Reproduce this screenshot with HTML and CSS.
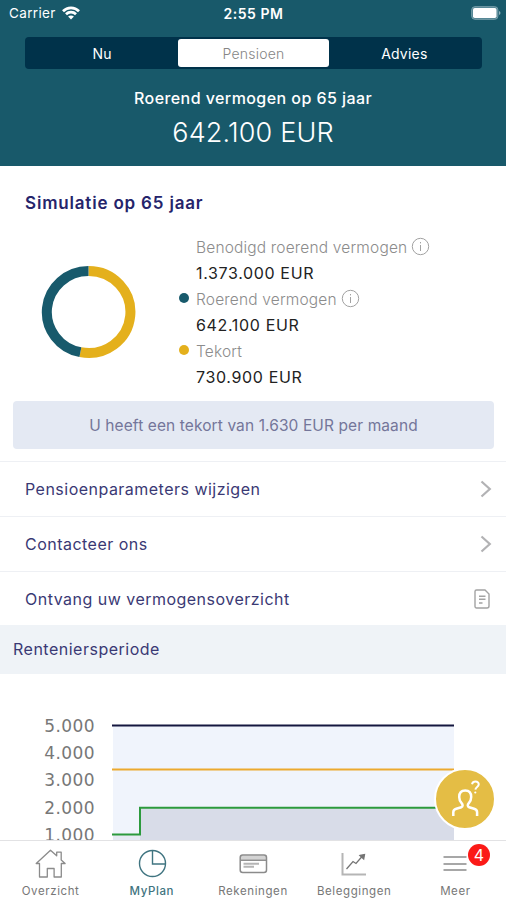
FILE: index.html
```
<!DOCTYPE html>
<html lang="nl">

<head>
    <meta charset="UTF-8">
    <meta name="viewport" content="width=device-width, initial-scale=1.0">
    <title>MyPlan</title>
    <link rel="stylesheet" href="styles.css">
</head>

<body>

    <header class="header">
        <div class="status-bar">
            <div class="carrier">
                <span>Carrier</span>
                <svg width="18" height="14" viewBox="0 0 18 14" fill="none" stroke="#fff" stroke-width="2.7">
                    <path d="M1 5.2C5.4 .7 12.6 .7 17 5.2" />
                    <path d="M4 8.3C6.8 5.5 11.2 5.5 14 8.3" />
                    <path d="M9 13.6L6.1 10.6C7.8 9.2 10.2 9.2 11.9 10.6Z" fill="#fff" stroke="none" />
                </svg>
            </div>
            <span class="time">2:55 PM</span>
            <svg class="battery" width="30" height="14" viewBox="0 0 30 14">
                <rect x=".7" y=".7" width="26.2" height="12.6" rx="3.2" fill="#4f8290" stroke="#7ba2ad" />
                <rect x="2" y="2" width="23.5" height="10" rx="1.8" fill="#fff" />
                <path d="M28 5v4c2-.8 2-3.2 0-4z" fill="#8fb0ba" />
            </svg>
        </div>
        <nav class="segments">
            <div class="segment">Nu</div>
            <div class="segment active">Pensioen</div>
            <div class="segment">Advies</div>
        </nav>
        <h1>Roerend vermogen op 65 jaar</h1>
        <p class="total">642.100 EUR</p>
    </header>

    <main class="content">
        <section class="simulation">
            <h2>Simulatie op 65 jaar</h2>
            <div class="summary">
                <svg class="donut" width="96" height="94" viewBox="0 0 96 94" fill="none" stroke-width="10">
                    <path d="M47.5 6A41.8 41 0 1 1 39.4 87.2" stroke="#e4b01c" />
                    <path d="M39.4 87.2A41.8 41 0 0 1 47.5 6" stroke="#185a6c" />
                </svg>
                <dl class="legend">
                    <dt><span>Benodigd roerend vermogen</span>
                        <svg width="19" height="19" viewBox="0 0 19 19" fill="none" stroke="#a2a2a2"><circle cx="9.5" cy="9.5" r="8.2" /><path d="M9.5 5v1.4M9.5 8v6" /></svg>
                    </dt>
                    <dd>1.373.000 EUR</dd>
                    <dt class="dot blue"><span>Roerend vermogen</span>
                        <svg width="19" height="19" viewBox="0 0 19 19" fill="none" stroke="#a2a2a2"><circle cx="9.5" cy="9.5" r="8.2" /><path d="M9.5 5v1.4M9.5 8v6" /></svg>
                    </dt>
                    <dd>642.100 EUR</dd>
                    <dt class="dot yellow"><span>Tekort</span></dt>
                    <dd>730.900 EUR</dd>
                </dl>
            </div>
            <div class="notice">U heeft een tekort van 1.630 EUR per maand</div>
        </section>

        <ul class="links">
            <li>
                <span>Pensioenparameters wijzigen</span>
                <svg width="12" height="18" viewBox="0 0 12 18" fill="none" stroke="#b2b2b4" stroke-width="2.2"><path d="M1.5 1.5L9.8 9l-8.3 7.5" /></svg>
            </li>
            <li>
                <span>Contacteer ons</span>
                <svg width="12" height="18" viewBox="0 0 12 18" fill="none" stroke="#b2b2b4" stroke-width="2.2"><path d="M1.5 1.5L9.8 9l-8.3 7.5" /></svg>
            </li>
            <li>
                <span>Ontvang uw vermogensoverzicht</span>
                <svg class="doc" width="16" height="20" viewBox="0 0 16 20" fill="none" stroke="#a3a3a3" stroke-width="1.4">
                    <path d="M2.5 1H11l4 4v12a2 2 0 0 1-2 2H2.5A1.5 1.5 0 0 1 1 17.5V2.5A1.5 1.5 0 0 1 2.5 1z" />
                    <path d="M5 7.2h6.5M5 10.2h6.5M5 14h3.5" stroke-width="1.5" />
                </svg>
            </li>
        </ul>

        <h3>Renteniersperiode</h3>

        <section class="chart">
            <div class="axis">
                <span>5.000</span>
                <span>4.000</span>
                <span>3.000</span>
                <span>2.000</span>
                <span>1.000</span>
            </div>
            <svg width="342" height="126" viewBox="0 0 342 126" fill="none" stroke-width="2">
                <rect x="1" y="11" width="341" height="115" fill="#f0f4fc" />
                <path d="M28 126V94H342V126z" fill="#d8dce8" />
                <path d="M1 120H28V126H1z" fill="#e6eaf3" />
                <path d="M0 11.5H342" stroke="#14173f" />
                <path d="M0 55.5H342" stroke="#eca92f" />
                <path d="M0 120.5H28V93.8H342" stroke="#2c9a3d" />
            </svg>
        </section>
    </main>

    <div class="help">
        <svg width="32" height="40" viewBox="0 0 32 40" fill="none" stroke="#fff" stroke-width="2.5">
            <path d="M3.3 36v-3.8c0-1.7 1-2.8 3-3.4l5-1.6c1.8-.6 1.6-2.6.3-4C9.6 21 9.2 19 9.2 17c0-4.5 2.5-6.5 6-6.5s6 2 6 6.5c0 2-.4 4-2.4 6.2-1.3 1.4-1.5 3.4.3 4l5 1.6c2 .6 3 1.7 3 3.4V36" />
            <path d="M22 4.2c.6-2 2-2.6 3.4-2.6 2.3 0 3.5 1.3 3.3 3-.2 2.400-3.2 2.4-3.300 5" stroke-width="2" />
            <circle cx="25.3" cy="12.5" r="1.1" fill="#fff" stroke="none" />
        </svg>
    </div>

    <nav class="tab-bar">
        <div class="tab">
            <svg width="32" height="30" viewBox="0 0 32 30" fill="none" stroke="#8b8b8b" stroke-width="1.3">
                <path d="M4.5 14.5H1.2L15.5 1.2l6.2 5.600V3.2h4.5v7.7l3.9 3.6h-3.8V28h-7.2v-8.5h-6.8V28H4.5z" stroke-linejoin="round" />
            </svg>
            <span>Overzicht</span>
        </div>
        <div class="tab selected">
            <svg width="30" height="30" viewBox="0 0 30 30" fill="none" stroke="#3f7480" stroke-width="1.4">
                <circle cx="15.5" cy="14.5" r="13" />
                <path d="M15.5 1.5V15H28.5" />
            </svg>
            <span>MyPlan</span>
        </div>
        <div class="tab">
            <svg width="30" height="30" viewBox="0 0 30 30" fill="none" stroke="#8b8b8b" stroke-width="1.5">
                <path d="M2.5 8.5h26" stroke="#d3d3d3" stroke-width="4" />
                <rect x="2.2" y="6" width="26.3" height="17.5" rx="2.5" />
                <path d="M2.2 11.2h26.3" />
                <path d="M5.5 14.7h15.500M5.5 17.700h10.500" stroke="#b5b5b5" stroke-width="2" />
            </svg>
            <span>Rekeningen</span>
        </div>
        <div class="tab">
            <svg width="30" height="30" viewBox="0 0 30 30" fill="none" stroke="#747474" stroke-width="1.3">
                <path d="M3.5 4v21.5h23.5" stroke="#b5b5b5" stroke-width="2" />
                <path d="M7.5 20l6.5-7.500 3 2L23.5 7" />
                <path d="M21 6.5l4.5-1-.8 4.5z" fill="#747474" />
            </svg>
            <span>Beleggingen</span>
        </div>
        <div class="tab">
            <svg width="30" height="30" viewBox="0 0 30 30" fill="none" stroke="#8b8b8b" stroke-width="1.5">
                <path d="M3.5 8H26.5M3.5 15H26.5M3.5 21H26.5" />
            </svg>
            <span>Meer</span>
            <b class="badge">4</b>
        </div>
    </nav>

</body>

</html>
```
FILE: styles.css
```
* {
    box-sizing: border-box;
}

body {
    display: flex;
    flex-direction: column;
    height: 900px;
    margin: 0;
    overflow: hidden;
    background-color: #fff;
    color: #3a3974;
    font-family: Inter, "Liberation Sans", sans-serif;
    font-size: 16px;
    white-space: nowrap;
}

h1, h2, h3, p, ul, dl, dd {
    margin: 0;
    padding: 0;
}

svg {
    display: block;
    flex-shrink: 0;
}

.header {
    height: 166px;
    flex-shrink: 0;
    background-color: #18596a;
    color: #fff;
    text-align: center;
}

.status-bar {
    display: grid;
    grid-template-columns: 1fr auto 1fr;
    align-items: center;
    height: 26px;
    padding: 0 5px 0 9px;
    font-size: 13.5px;
}

.carrier {
    display: flex;
    align-items: center;
    gap: 6px;
    letter-spacing: 0.35px;
}

.time {
    margin-right: 3px;
    font-size: 14px;
    font-weight: 600;
    letter-spacing: 0.5px;
}

.battery {
    justify-self: end;
}

.segments {
    display: grid;
    grid-template-columns: repeat(3, 1fr);
    width: 457px;
    height: 32px;
    margin: 11px 0 0 25px;
    border-radius: 4px;
    background-color: #00324a;
}

.segment {
    display: flex;
    align-items: center;
    justify-content: center;
    font-size: 14px;
    letter-spacing: 0.2px;
    border-radius: 3px;
}

.segment:first-child {
    padding-left: 2px;
}

.segment:last-child {
    padding-right: 3px;
}

.segment.active {
    margin: 2px 1px;
    background-color: #fff;
    color: #858585;
    font-weight: 300;
}

h1 {
    margin-top: 18px;
    font-size: 16px;
    font-weight: 500;
    line-height: 22px;
    letter-spacing: 0.43px;
}

.total {
    margin-top: 8px;
    font-size: 27px;
    font-weight: 300;
    line-height: 31px;
    letter-spacing: 0.15px;
}

.content {
    flex: 1;
    min-height: 0;
    overflow: hidden;
}

.simulation {
    height: 295px;
}

h2 {
    padding: 26px 0 0 25px;
    color: #25246b;
    font-size: 17px;
    font-weight: 600;
    line-height: 22px;
    letter-spacing: 0.82px;
}

.summary {
    display: flex;
    padding-top: 20px;
}

.donut {
    margin: 31px 0 0 41px;
}

.legend {
    margin-left: 59px;
    line-height: 26px;
}

.legend dt {
    display: flex;
    align-items: center;
    gap: 4px;
    height: 26px;
    color: #8c8c8c;
    font-size: 15.5px;
    font-weight: 300;
    letter-spacing: 0.17px;
}

.legend dt span {
    padding-top: 1px;
}

.legend dt svg {
    margin-top: -1px;
}

.legend dd {
    height: 26.2px;
    color: #222;
    letter-spacing: 0.65px;
}

.dot::before {
    content: "";
    width: 10px;
    height: 10px;
    margin: -2px 4px 0 -17px;
    border-radius: 50%;
}

.dot span {
    margin-left: -1px;
}

.dot.blue::before {
    background-color: #185a6c;
}

.dot.yellow::before {
    background-color: #e4b01c;
}

.notice {
    height: 48px;
    margin: 10px 12px 0 13px;
    border-radius: 4px;
    background-color: #e4e9f3;
    color: #74769a;
    font-size: 15.5px;
    line-height: 49px;
    text-align: center;
    letter-spacing: 0.1px;
}

.links {
    list-style: none;
}

.links li {
    display: flex;
    align-items: center;
    justify-content: space-between;
    height: 55px;
    padding: 0 14px 0 25px;
    border-top: 1px solid #eef0f4;
    letter-spacing: 0.48px;
}

.links li:last-child {
    height: 54px;
}

.links .doc {
    margin-right: 2px;
}

h3 {
    height: 49px;
    padding-left: 13px;
    background-color: #eff3f7;
    font-size: 16px;
    font-weight: 400;
    line-height: 48px;
    letter-spacing: 0.5px;
}

.chart {
    display: flex;
    gap: 17px;
}

.chart svg {
    margin-top: 40px;
}

.axis {
    display: flex;
    flex-direction: column;
    width: 95px;
    padding-top: 39px;
    color: #777;
    font-family: "DejaVu Sans", sans-serif;
    font-size: 17px;
    line-height: 27.2px;
    letter-spacing: 0.4px;
    text-align: right;
}

/* floating help button */
.help {
    position: absolute;
    left: 434px;
    top: 768px;
    width: 62px;
    height: 62px;
    padding: 10px 0 0 14px;
    border: 2px solid #fff;
    border-radius: 50%;
    background-color: #e4bd45;
}

.tab-bar {
    display: grid;
    grid-template-columns: repeat(5, 1fr);
    flex-shrink: 0;
    height: 60px;
    border-top: 1px solid #e2e2e4;
    background-color: #fff;
}

.tab {
    position: relative;
    display: flex;
    flex-direction: column;
    align-items: center;
    padding-top: 8px;
    color: #777;
    font-size: 11.5px;
    line-height: 14px;
    letter-spacing: 0.6px;
}

.tab span {
    margin-top: 5px;
}

.tab.selected {
    color: #3f7480;
    font-weight: 500;
}

.badge {
    position: absolute;
    left: 63px;
    top: 3px;
    width: 22px;
    height: 22px;
    border-radius: 50%;
    background-color: #fb1a17;
    color: #fff;
    font-size: 16px;
    font-weight: 400;
    line-height: 22px;
    letter-spacing: 0;
    text-align: center;
}
```
